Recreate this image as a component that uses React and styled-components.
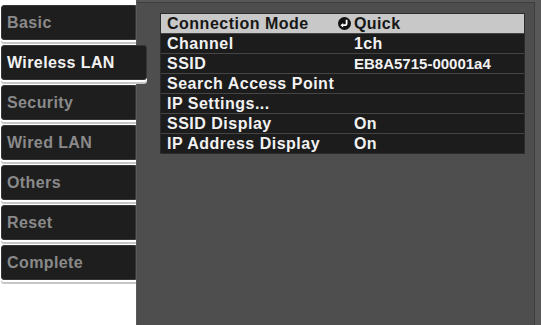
import React from 'react'
import styled, { createGlobalStyle } from 'styled-components'

const tabs = ['Basic', 'Wireless LAN', 'Security', 'Wired LAN', 'Others', 'Reset', 'Complete']

const rows = [
  { label: 'Connection Mode', value: 'Quick', icon: true, active: true },
  { label: 'Channel', value: '1ch' },
  { label: 'SSID', value: 'EB8A5715-00001a4', narrow: true },
  { label: 'Search Access Point', value: '' },
  { label: 'IP Settings...', value: '' },
  { label: 'SSID Display', value: 'On' },
  { label: 'IP Address Display', value: 'On' },
]

const QuickIcon = () => (
  <svg width="13" height="13" viewBox="0 0 13 13">
    <circle cx="6.5" cy="6.5" r="6.5" fill="#111" />
    <path d="M8.6 2.8 V6.4 A1.8 1.8 0 0 1 6.8 8.2 H4.6" fill="none" stroke="#fff" strokeWidth="1.8" />
    <path d="M2.4 8.2 L5.2 5.9 V10.5 Z" fill="#fff" />
  </svg>
)

const App = () => {
  return (
    <>
      <GlobalStyle />
      <Screen>
        <Sidebar>
          {tabs.map((t) => (
            <Tab key={t} $selected={t === 'Wireless LAN'}>{t}</Tab>
          ))}
        </Sidebar>

        <Panel>
          <List>
            {rows.map((r) => (
              <Row key={r.label} $active={r.active}>
                <Label>{r.label}</Label>
                <IconSlot>{r.icon && <QuickIcon />}</IconSlot>
                <Value $narrow={r.narrow}>{r.value}</Value>
              </Row>
            ))}
          </List>
        </Panel>
      </Screen>
    </>
  )
}

export default App

const GlobalStyle = createGlobalStyle`
    html, body {
        margin: 0;
        padding: 0;
        background: #ffffff;
    }
    body {
        font-family: 'Liberation Sans', Arial, sans-serif;
    }
`

const Screen = styled.div`
    width: 541px;
    height: 325px;
    display: flex;
    flex-direction: row;
    overflow: hidden;
`

const Sidebar = styled.div`
    width: 136px;
    flex-shrink: 0;
    display: flex;
    flex-direction: column;
    padding: 5px 0 0 1px;
    box-sizing: border-box;
    position: relative;
    z-index: 2;
`

const Tab = styled.div`
    height: 35px;
    width: ${(p) => (p.$selected ? '146px' : '135px')};
    margin-bottom: 5px;
    box-sizing: border-box;
    display: flex;
    align-items: center;
    padding-left: 5px;
    background-color: #1e1e1e;
    border: 1px solid #353535;
    border-radius: ${(p) => (p.$selected ? '3px' : '3px 0 0 3px')};
    box-shadow: 0 2px 0 #ffffff, 0 4px 0 #c6c6c6;
    font-weight: 700;
    font-size: 16px;
    letter-spacing: 0.4px;
    color: ${(p) => (p.$selected ? '#f2f2f2' : '#8a8a8a')};
`

const Panel = styled.div`
    flex: 1;
    height: 325px;
    box-sizing: border-box;
    background-color: #4e4e4e;
    border-left: 1px solid #5a5a5a;
    border-top: 2px solid #575757;
    border-right: 6px solid #585858;
    box-shadow: inset -1px 0 #3e3e3e, inset 0 1px #3e3e3e;
    padding: 11px 10px 0 23px;
`

const List = styled.div`
    display: flex;
    flex-direction: column;
    gap: 1px;
    background-color: #454545;
    border: 1px solid #2c2c2c;
`

const Row = styled.div`
    height: 19px;
    display: grid;
    grid-template-columns: 171px 15px 1fr;
    align-items: center;
    padding-left: 6px;
    background-color: ${(p) => (p.$active ? '#c8c8c8' : '#1c1c1c')};
    color: ${(p) => (p.$active ? '#161616' : '#f2f2f2')};
    font-weight: 700;
    font-size: 16px;
    line-height: 19px;
    white-space: nowrap;
`

const Label = styled.span`
    letter-spacing: 0.5px;
`

const IconSlot = styled.span`
    display: flex;
    align-items: center;
`

const Value = styled.span`
    font-size: ${(p) => (p.$narrow ? '15px' : '16px')};
    letter-spacing: ${(p) => (p.$narrow ? '0' : '0.4px')};
    padding-left: 1px;
`
